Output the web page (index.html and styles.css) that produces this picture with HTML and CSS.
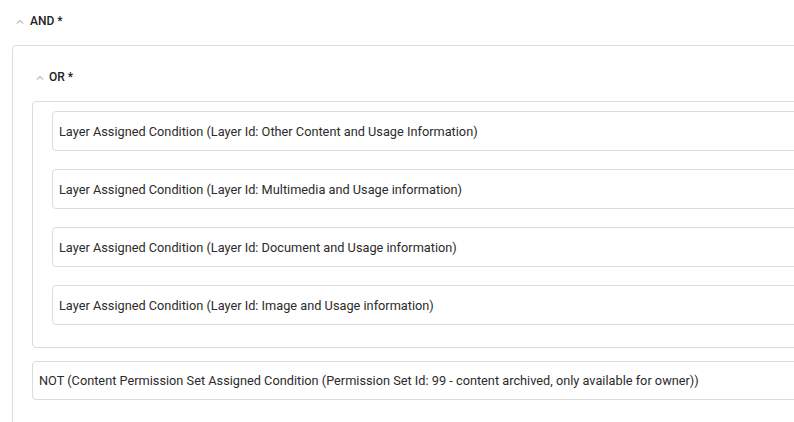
FILE: index.html
```html
<!DOCTYPE html>
<html>
<head>
<meta charset="utf-8">
<link rel="stylesheet" href="styles.css">
</head>
<body>
<div class="page">
  <div class="group-header">
    <svg class="chev" width="8" height="5" viewBox="0 0 8 5"><polyline points="1,4.5 4,1.5 7,4.5" fill="none" stroke="#8a8a8a" stroke-width="1"/></svg>
    <span class="label">AND *</span>
  </div>
  <div class="box outer">
    <div class="group-header">
      <svg class="chev" width="8" height="5" viewBox="0 0 8 5"><polyline points="1,4.5 4,1.5 7,4.5" fill="none" stroke="#8a8a8a" stroke-width="1"/></svg>
      <span class="label">OR *</span>
    </div>
    <div class="box inner">
      <div class="item">Layer Assigned Condition (Layer Id: Other Content and Usage Information)</div>
      <div class="item">Layer Assigned Condition (Layer Id: Multimedia and Usage information)</div>
      <div class="item">Layer Assigned Condition (Layer Id: Document and Usage information)</div>
      <div class="item">Layer Assigned Condition (Layer Id: Image and Usage information)</div>
    </div>
    <div class="item not">NOT (Content Permission Set Assigned Condition (Permission Set Id: 99 - content archived, only available for owner))</div>
  </div>
</div>
</body>
</html>
```
FILE: styles.css
```css
html, body {
  margin: 0;
  padding: 0;
  background: #fff;
  overflow: hidden;
}
body {
  font-family: Roboto, "Liberation Sans", sans-serif;
  font-size: 12px;
  color: #333;
}
.page {
  padding-left: 12px;
  width: 1100px;
}
.group-header {
  display: flex;
  align-items: center;
  padding: 12px 0 0 4px;
  height: 18px;
  margin-bottom: 15px;
}
.chev {
  display: block;
  margin-right: 6px;
  margin-top: 1px;
}
.label {
  font-weight: 500;
  color: #222;
  line-height: 18px;
}
.box {
  border: 1px solid #dcdcdc;
  border-radius: 4px;
  box-sizing: border-box;
}
.outer {
  padding: 10px 0 40px 19px;
}
.outer > .group-header .chev {
  margin-right: 5px;
}
.inner {
  padding: 9px 0 4px 19px;
  margin-bottom: 13px;
}
.item {
  border: 1px solid #dcdcdc;
  border-radius: 4px;
  height: 40px;
  box-sizing: border-box;
  display: flex;
  align-items: center;
  padding-left: 6px;
  margin-bottom: 18px;
  font-size: 12.75px;
  color: #2b2b2b;
}
.item.not {
  height: 39px;
  margin-bottom: 0;
}
```
